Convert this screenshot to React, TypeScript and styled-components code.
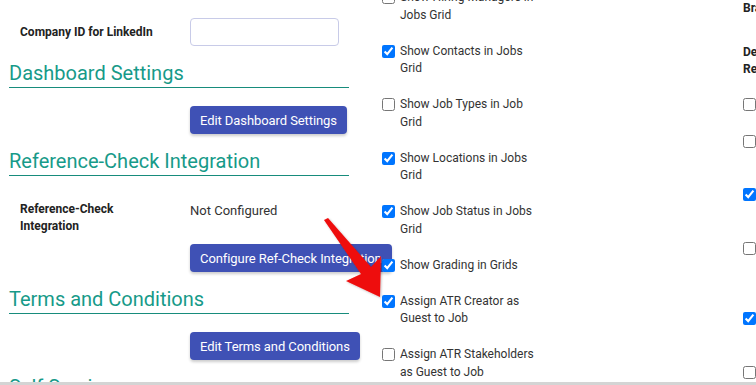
import React from "react";
import styled, { createGlobalStyle } from "styled-components";

const LEFT_OPTIONS = [
  { id: 1, label: "Show Hiring Managers in Jobs Grid", checked: false },
  { id: 2, label: "Show Contacts in Jobs Grid", checked: true },
  { id: 3, label: "Show Job Types in Job Grid", checked: false },
  { id: 4, label: "Show Locations in Jobs Grid", checked: true },
  { id: 5, label: "Show Job Status in Jobs Grid", checked: true },
  { id: 6, label: "Show Grading in Grids", checked: true },
  { id: 7, label: "Assign ATR Creator as Guest to Job", checked: true },
  { id: 8, label: "Assign ATR Stakeholders as Guest to Job", checked: false },
];

const RIGHT_OPTIONS = [
  { id: 1, label: "Send rejection email", checked: false },
  { id: 2, label: "Send rejection email to applicants", checked: false },
  { id: 3, label: "Show rejection reasons to hiring managers", checked: true },
  { id: 4, label: "Require a rejection reason before moving applicants out of the pipeline", checked: false },
  { id: 5, label: "Allow custom rejection reasons per job", checked: true },
  { id: 6, label: "Notify recruiters of rejections", checked: false },
];

const GlobalStyle = createGlobalStyle`
  html, body {
    margin: 0;
    padding: 0;
    background: #fff;
    overflow: hidden;
  }
  body {
    font-family: Roboto, "Liberation Sans", sans-serif;
    color: #333;
  }
`;

function Arrow() {
  return (
    <ArrowSvg width="90" height="100" viewBox="310 210 90 100">
      <defs>
        <filter id="arrowShadow" x="-20%" y="-20%" width="140%" height="140%">
          <feDropShadow dx="1" dy="1" stdDeviation="1" floodColor="#000" floodOpacity="0.25" />
        </filter>
      </defs>
      <polygon
        points="324,220 328,218 371,267 381,256 380,297 346,281 361,274"
        fill="#ee0a0a"
        filter="url(#arrowShadow)"
      />
    </ArrowSvg>
  );
}

function App() {
  return (
    <Page>
      <GlobalStyle />
      <Content>
        <Columns>
          <LeftColumn>
            <FieldRow>
              <FieldLabel>Company ID for LinkedIn</FieldLabel>
              <TextInput type="text" />
            </FieldRow>

            <SectionTitle>Dashboard Settings</SectionTitle>
            <ButtonRow>
              <ActionButton>Edit Dashboard Settings</ActionButton>
            </ButtonRow>

            <SectionTitle>Reference-Check Integration</SectionTitle>
            <FieldRow $top>
              <FieldLabel>
                Reference-Check
                <br />
                Integration
              </FieldLabel>
              <FieldValue>Not Configured</FieldValue>
            </FieldRow>
            <ButtonRow $tight>
              <ActionButton>Configure Ref-Check Integration</ActionButton>
            </ButtonRow>

            <SectionTitle>Terms and Conditions</SectionTitle>
            <ButtonRow>
              <ActionButton>Edit Terms and Conditions</ActionButton>
            </ButtonRow>

            <SectionTitle>Self Service</SectionTitle>
          </LeftColumn>

          <MiddleColumn>
            {LEFT_OPTIONS.map((item) => (
              <Option key={item.id}>
                <Check type="checkbox" defaultChecked={item.checked} />
                <OptionText>{item.label}</OptionText>
              </Option>
            ))}
          </MiddleColumn>

          <RightColumn>
            <SideLabel $gap>Branding</SideLabel>
            <SideLabel>Default Rejection Reasons</SideLabel>
            {RIGHT_OPTIONS.map((item) => (
              <Option key={item.id}>
                <Check type="checkbox" defaultChecked={item.checked} />
                <SideText>{item.label}</SideText>
              </Option>
            ))}
          </RightColumn>
        </Columns>
        <Arrow />
      </Content>
      <ScrollTrack />
    </Page>
  );
}

export default App;

const Page = styled.div`
  height: 385px;
  width: 756px;
  display: flex;
  flex-direction: column;
  overflow: hidden;
`;

const Content = styled.div`
  position: relative;
  flex: 1;
  overflow: hidden;
`;

const Columns = styled.div`
  display: flex;
  align-items: flex-start;
  width: 1100px;
`;

const LeftColumn = styled.div`
  width: 340px;
  margin-left: 9px;
  padding-top: 18px;
  display: flex;
  flex-direction: column;
`;

const FieldRow = styled.div<{ $top?: boolean }>`
  display: grid;
  grid-template-columns: 181px 1fr;
  align-items: ${(p) => (p.$top ? "start" : "center")};
  margin-top: ${(p) => (p.$top ? "25px" : "0")};
`;

const FieldLabel = styled.div`
  padding-left: 11px;
  font-size: 12px;
  line-height: 17px;
  font-weight: 700;
  color: #222;
`;

const FieldValue = styled.div`
  font-size: 13px;
  line-height: 17px;
  color: #333;
  padding-top: 1px;
`;

const TextInput = styled.input`
  box-sizing: border-box;
  width: 149px;
  height: 28px;
  border: 1px solid #c8cbe8;
  border-radius: 4px;
  background: #fff;
  outline: none;
`;

const SectionTitle = styled.div`
  margin-top: 15px;
  padding-bottom: 2px;
  font-size: 20px;
  line-height: 24px;
  color: #179a89;
  border-bottom: 1px solid #178c7c;
`;

const ButtonRow = styled.div<{ $tight?: boolean }>`
  display: flex;
  padding-left: 181px;
  margin-top: ${(p) => (p.$tight ? "9px" : "18px")};
`;

const ActionButton = styled.button`
  flex: none;
  height: 28px;
  padding: 0 10px;
  border: none;
  border-radius: 4px;
  background: #3f51b5;
  color: #fff;
  font-family: Roboto, "Liberation Sans", sans-serif;
  font-size: 13px;
  letter-spacing: -0.08px;
  white-space: nowrap;
  box-shadow: 0 2px 3px rgba(0, 0, 0, 0.2);
  position: relative;
  z-index: 1;
`;

const MiddleColumn = styled.div`
  margin-left: 32px;
  margin-top: -11px;
  width: 160px;
  display: flex;
  flex-direction: column;
  gap: 18.5px;
  position: relative;
  z-index: 2;
`;

const Option = styled.label`
  display: flex;
  align-items: flex-start;
`;

const Check = styled.input`
  flex: none;
  width: 13px;
  height: 13px;
  margin: 2px 5px 0 1px;
`;

const OptionText = styled.span`
  width: 138px;
  font-size: 12px;
  line-height: 17.5px;
  color: #333;
`;

const RightColumn = styled.div`
  margin-left: 201px;
  margin-top: 0;
  width: 200px;
  display: flex;
  flex-direction: column;
  gap: 19.5px;
`;

const SideLabel = styled.div<{ $gap?: boolean }>`
  width: 110px;
  padding-left: 1px;
  font-size: 12px;
  line-height: 17px;
  font-weight: 700;
  color: #222;
  margin-bottom: ${(p) => (p.$gap ? "7px" : "-1px")};
`;

const SideText = styled.span`
  width: 170px;
  font-size: 12px;
  line-height: 17px;
  color: #333;
`;

const ArrowSvg = styled.svg`
  position: absolute;
  left: 310px;
  top: 210px;
  z-index: 3;
  overflow: visible;
`;

const ScrollTrack = styled.div`
  flex: none;
  height: 3px;
  background: #d4d4d4;
`;
